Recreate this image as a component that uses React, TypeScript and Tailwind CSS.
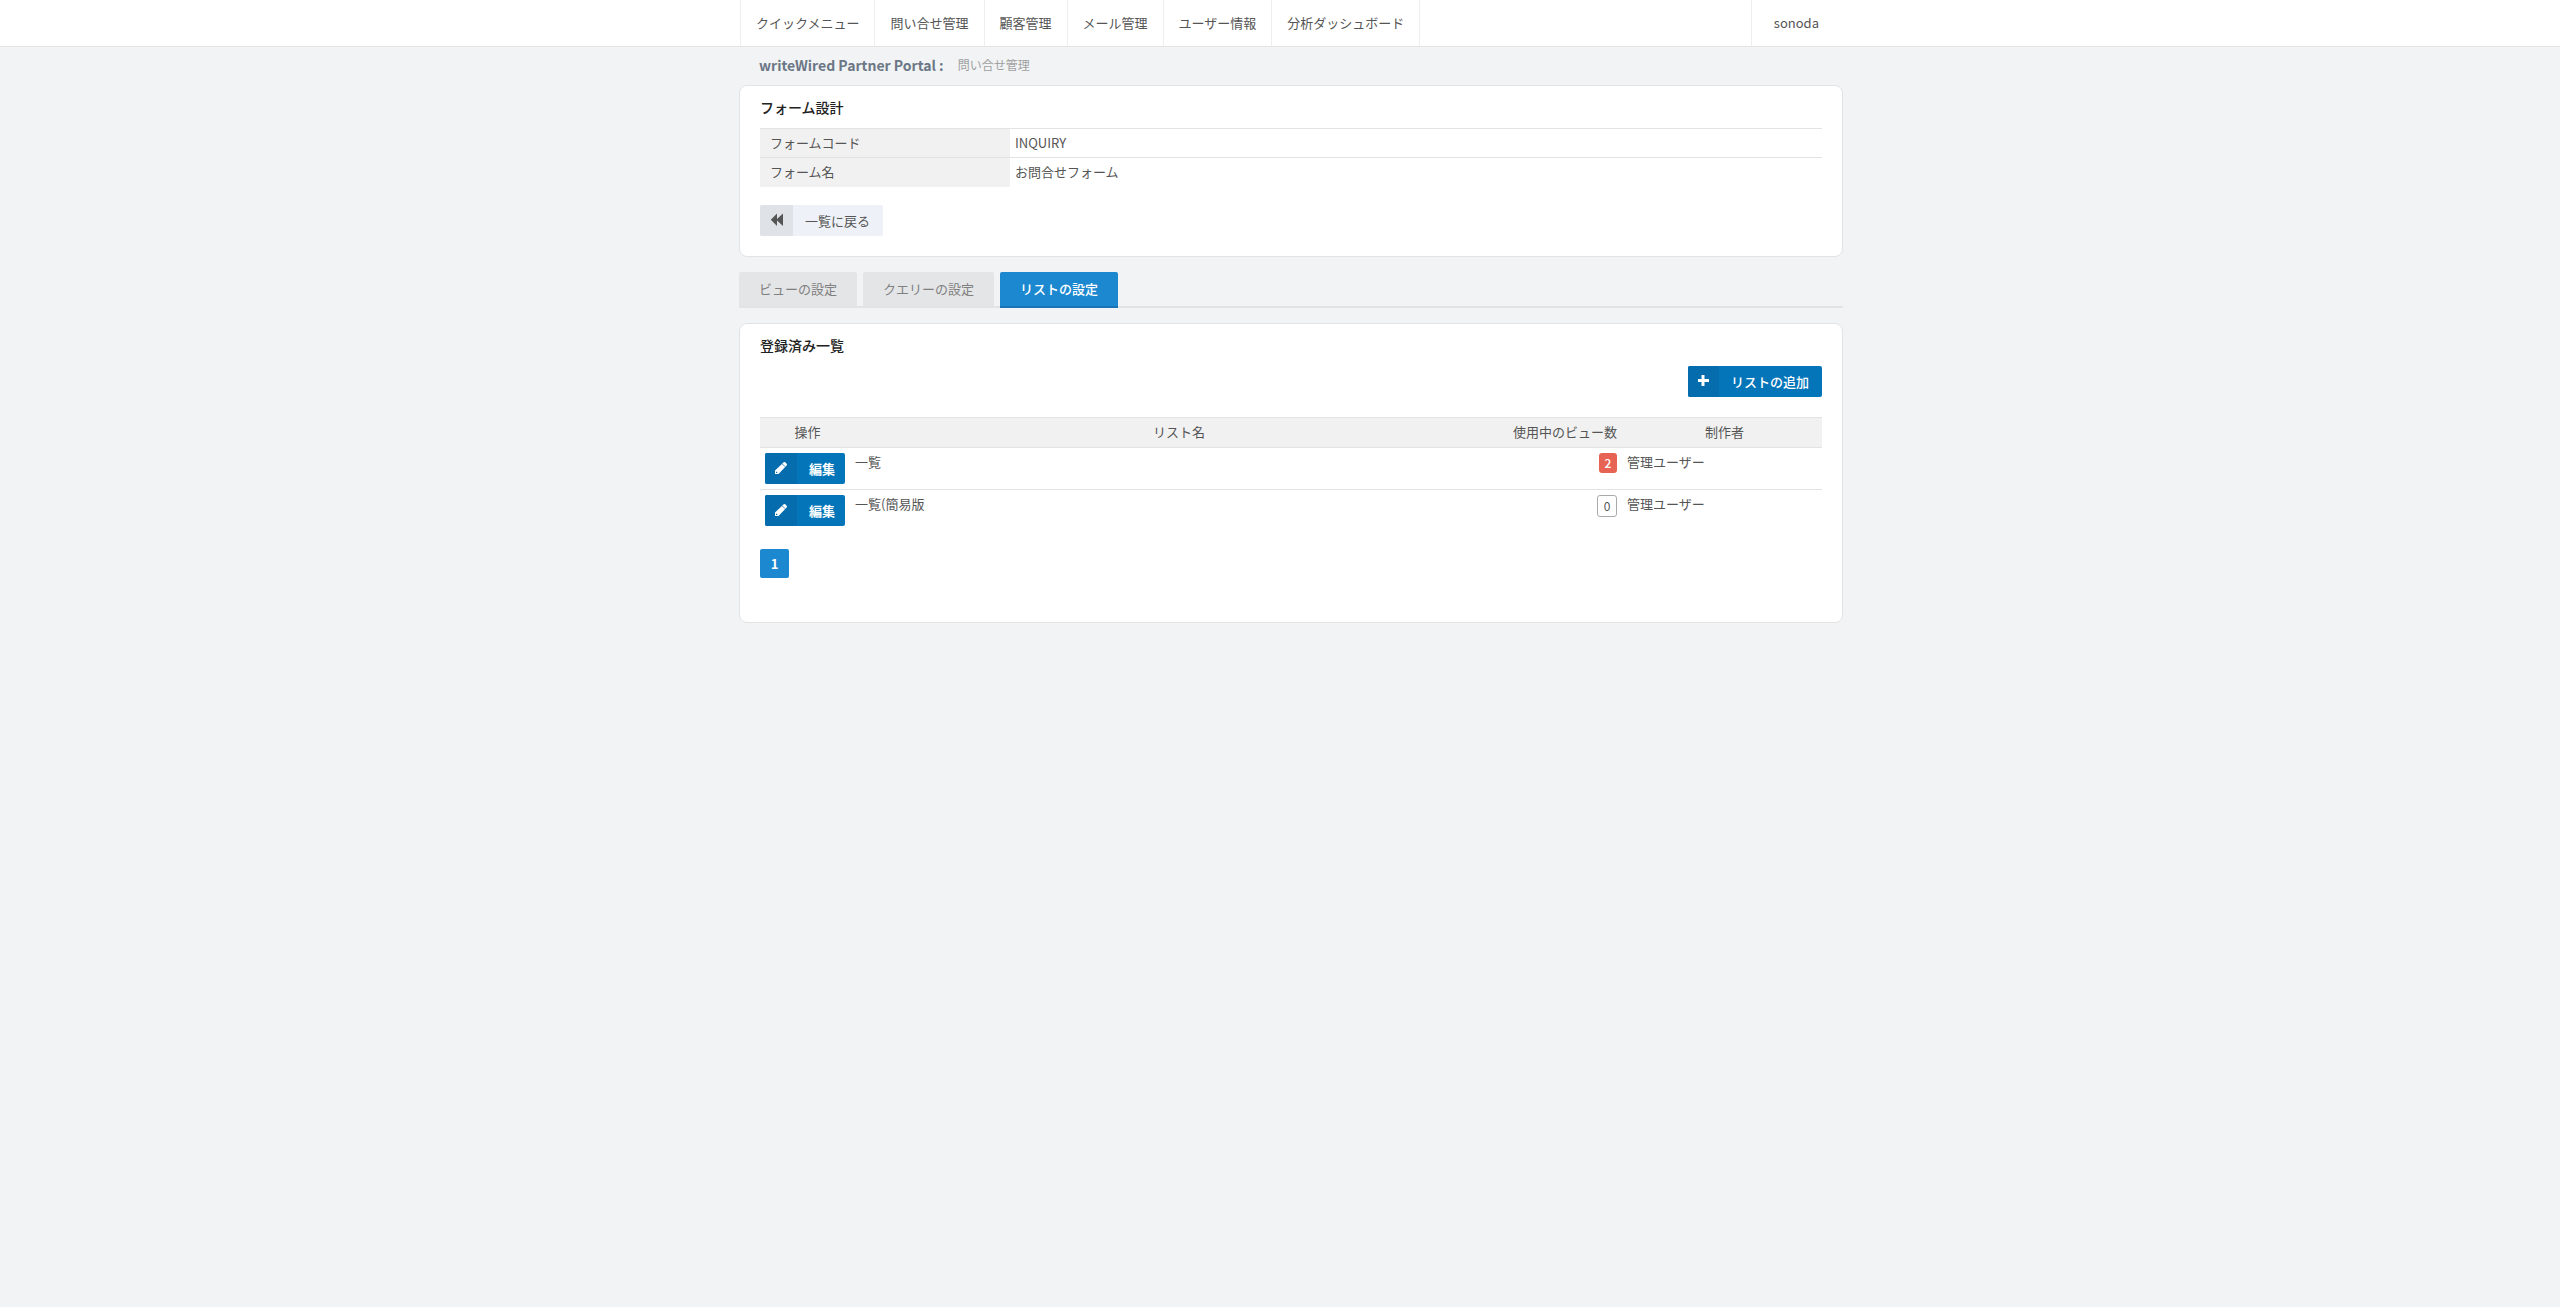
import { useState } from 'react';
import type { ReactNode } from 'react';

const menus = ['クイックメニュー', '問い合せ管理', '顧客管理', 'メール管理', 'ユーザー情報', '分析ダッシュボード'];

const tabs = ['ビューの設定', 'クエリーの設定', 'リストの設定'];

const lists = [
  { id: 1, name: '一覧', views: 2, author: '管理ユーザー' },
  { id: 2, name: '一覧(簡易版', views: 0, author: '管理ユーザー' },
];

const BackwardIcon = () => (
  <svg viewBox="0 0 14 14" className="w-[14px] h-[14px] fill-current" aria-hidden="true">
    <path d="M.8 6.7L7 .5V5.9L13 .4V13L7 7.5V12.9Z" />
  </svg>
);

const PlusIcon = () => (
  <svg viewBox="0 0 12 12" className="w-3 h-3 fill-current" aria-hidden="true">
    <path d="M4.5 0h3v4H12v3H7.5v4h-3V7H1V4h3.5z" />
  </svg>
);

const PencilIcon = () => (
  <svg viewBox="0 0 12 12" className="w-3 h-3 fill-current" aria-hidden="true">
    <path
      fillRule="evenodd"
      d="M0 12V8.6L6.9 1.9 10.2 5.1 3.5 12ZM1.1 9.9V10.9H2.1L2.6 10.4 1.6 9.4Z"
    />
    <path d="M7.2 1.6L8.4.5Q9.5-.4 10.6.6L11.4 1.4Q12.4 2.5 11.5 3.7L10.5 4.8Z" />
  </svg>
);

const Card = ({ title, children }: { title: string; children: ReactNode }) => (
  <section className="bg-white border border-[#e2e3e5] rounded-lg px-5 pt-[11px] pb-5">
    <h2 className="text-sm leading-5 font-medium text-[#222]">{title}</h2>
    {children}
  </section>
);

const App = () => {
  const [activeTab, setActiveTab] = useState('リストの設定');

  return (
    <div className="min-h-screen bg-[#f1f3f5] text-[13px] leading-5 text-[#555] font-['Noto_Sans_CJK_JP',sans-serif]">
      <header className="bg-white border-b border-[#e2e3e5] pl-[22px]">
        <div className="max-w-[1104px] mx-auto flex justify-between">
          <nav className="flex ml-px border-l border-[#eee]">
            {menus.map((menu) => (
              <a key={menu} href="#" className="flex items-center h-[46px] px-[15px] border-r border-[#eee]">
                {menu}
              </a>
            ))}
          </nav>
          <a href="#" className="flex items-center h-[46px] pl-[22px] pr-6 border-l border-[#eee]">
            sonoda
          </a>
        </div>
      </header>

      <div className="pl-[22px]">
        <main className="max-w-[1104px] mx-auto">
          <div className="flex items-center gap-[14px] h-[38px] px-5 pb-0.5">
            <h1 className="text-sm leading-5 font-bold text-[#6b7785]">writeWired Partner Portal :</h1>
            <span className="text-xs leading-5 text-[#a0a0a0]">問い合せ管理</span>
          </div>

          <Card title="フォーム設計">
            <table className="w-full mt-[11px] table-fixed">
              <tbody>
                <tr className="border-t border-[#e2e3e5]">
                  <th className="w-[250px] px-[10px] py-1 text-left font-normal bg-[#f1f1f1]">フォームコード</th>
                  <td className="px-[5px] py-1">INQUIRY</td>
                </tr>
                <tr className="border-t border-[#e2e3e5]">
                  <th className="px-[10px] pt-1 pb-[5px] text-left font-normal bg-[#f1f1f1]">フォーム名</th>
                  <td className="px-[5px] pt-1 pb-[5px]">お問合せフォーム</td>
                </tr>
              </tbody>
            </table>
            <button type="button" className="flex mt-[18px] h-[31px] rounded-xs overflow-hidden bg-[#eef1f7]">
              <span className="flex items-center justify-center w-[33px] h-full pb-px bg-[#dfe2e7]">
                <BackwardIcon />
              </span>
              <span className="pl-3 pr-[13px] pt-1.5">一覧に戻る</span>
            </button>
          </Card>

          <div className="flex gap-1.5 mt-[15px] h-9 shadow-[inset_0_-2px_0_#e2e3e5]" role="tablist">
            {tabs.map((tab) => (
              <button
                key={tab}
                type="button"
                role="tab"
                aria-selected={tab === activeTab}
                onClick={() => setActiveTab(tab)}
                className={`px-5 pb-px rounded-t-xs border-b-2 ${
                  tab === activeTab
                    ? 'bg-[#1c88cf] border-[#1a75b8] text-white font-medium'
                    : 'bg-[#e4e5e7] border-[#e2e3e5] text-[#808080]'
                }`}
              >
                {tab}
              </button>
            ))}
          </div>

          <div className="mt-[15px]">
            <Card title="登録済み一覧">
              <div className="flex justify-end mt-[11px]">
                <button type="button" className="flex h-[31px] rounded-xs overflow-hidden bg-[#0575b9] text-white font-medium">
                  <span className="flex items-center justify-center w-[31px] h-full pb-px bg-[#056cae]">
                    <PlusIcon />
                  </span>
                  <span className="pl-3 pr-[13px] pt-1.5">リストの追加</span>
                </button>
              </div>

              <table className="w-full mt-5 table-fixed">
                <thead>
                  <tr className="border-t border-[#e2e3e5] bg-[#f1f1f1]">
                    <th className="w-[90px] pl-[10px] pr-[5px] pt-1 pb-[5px] font-normal">操作</th>
                    <th className="pl-[10px] pr-[5px] pt-1 pb-[5px] font-normal">リスト名</th>
                    <th className="w-[119px] pl-[10px] pr-[5px] pt-1 pb-[5px] font-normal">使用中のビュー数</th>
                    <th className="w-[200px] pl-[10px] pr-[5px] pt-1 pb-[5px] font-normal">制作者</th>
                  </tr>
                </thead>
                <tbody>
                  {lists.map((list) => (
                    <tr key={list.id} className="border-t border-[#e2e3e5] align-top">
                      <td className="p-[5px]">
                        <button type="button" className="flex h-[31px] rounded-xs overflow-hidden bg-[#0575b9] text-white font-bold">
                          <span className="flex items-center justify-center w-8 h-full pb-px bg-[#056cae]">
                            <PencilIcon />
                          </span>
                          <span className="pl-3 pr-[10px] pt-1.5">編集</span>
                        </button>
                      </td>
                      <td className="px-[5px] py-1">{list.name}</td>
                      <td className="p-[5px]">
                        <span
                          className={`block ml-auto text-center rounded-[3px] text-xs leading-5 ${
                            list.views > 0 ? 'w-[18px] bg-[#e76353] text-white font-medium' : 'w-5 border border-[#aaa]'
                          }`}
                        >
                          {list.views}
                        </span>
                      </td>
                      <td className="px-[5px] py-1">{list.author}</td>
                    </tr>
                  ))}
                </tbody>
              </table>

              <div className="flex mt-[18px] mb-6">
                <button type="button" className="w-[29px] h-[29px] rounded-xs bg-[#1c88cf] text-white font-bold">
                  1
                </button>
              </div>
            </Card>
          </div>
        </main>
      </div>
    </div>
  );
};

export default App;
